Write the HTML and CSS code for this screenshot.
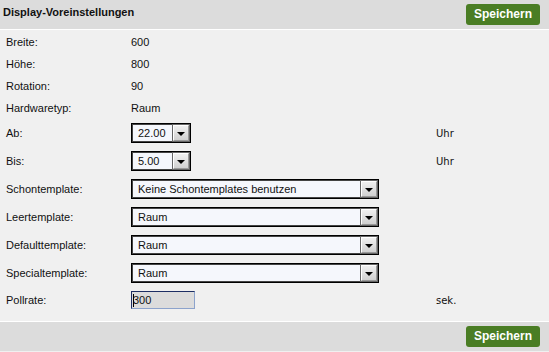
FILE: index.html
```html
<!DOCTYPE html>
<html>
<head>
    <meta charset="UTF-8">
    <title>Display-Voreinstellungen</title>
    <link rel="stylesheet" href="styles.css">
</head>
<body>
	<header class="bar">
		<h1>Display-Voreinstellungen</h1>
		<a class="btn" href="#">Speichern</a>
	</header>
	<main class="form">
		<div class="row info"><span class="label">Breite:</span><span class="value">600</span></div>
		<div class="row info"><span class="label">Höhe:</span><span class="value">800</span></div>
		<div class="row info"><span class="label">Rotation:</span><span class="value">90</span></div>
		<div class="row info"><span class="label">Hardwaretyp:</span><span class="value">Raum</span></div>

		<div class="row">
			<span class="label">Ab:</span>
			<div class="select small"><span class="select-value">22.00</span><span class="select-btn"></span></div>
			<span class="unit">Uhr</span>
		</div>
		<div class="row">
			<span class="label">Bis:</span>
			<div class="select small"><span class="select-value">5.00</span><span class="select-btn"></span></div>
			<span class="unit">Uhr</span>
		</div>
		<div class="row">
			<span class="label">Schontemplate:</span>
			<div class="select"><span class="select-value">Keine Schontemplates benutzen</span><span class="select-btn"></span></div>
		</div>
		<div class="row">
			<span class="label">Leertemplate:</span>
			<div class="select"><span class="select-value">Raum</span><span class="select-btn"></span></div>
		</div>
		<div class="row">
			<span class="label">Defaulttemplate:</span>
			<div class="select"><span class="select-value">Raum</span><span class="select-btn"></span></div>
		</div>
		<div class="row">
			<span class="label">Specialtemplate:</span>
			<div class="select"><span class="select-value">Raum</span><span class="select-btn"></span></div>
		</div>
		<div class="row poll">
			<span class="label">Pollrate:</span>
			<div class="input"><span class="caret"></span>300</div>
			<span class="unit">sek.</span>
		</div>
	</main>
	<footer class="bar foot">
		<a class="btn" href="#">Speichern</a>
	</footer>
</body>
</html>
```

FILE: styles.css
```css
body,h1{
	margin: 0;
}
body{
	background: #f0f0f0;
	font-family: "Liberation Sans", Arial, sans-serif;
	font-size: 11px;
	color: #111;
}
.bar{
	display: flex;
	align-items: center;
	justify-content: space-between;
	height: 29px;
	padding: 0 9px 0 3px;
	background: #dcdcdc;
	border-bottom: 1px solid #fff;
}
.bar h1{
	font-size: 11px;
	font-weight: bold;
	margin-top: -5px;
}
.foot{
	justify-content: flex-end;
	border-bottom: none;
	border-top: 1px solid #fff;
	align-items: flex-start;
	padding-top: 4px;
	height: 25px;
}
.btn{
	display: block;
	width: 74px;
	height: 21px;
	line-height: 21px;
	text-align: center;
	background: #4a7d24;
	color: #fff;
	font-weight: bold;
	font-size: 12px;
	text-decoration: none;
	border-radius: 3px;
}

.form{
	padding: 1px 0 8px 0;
}
.row{
	display: grid;
	grid-template-columns: 125px 305px auto;
	align-items: center;
	height: 28px;
	padding-left: 6px;
}
.row.info{
	height: 22px;
}
.row.poll{
	height: 26px;
}
.unit{
	font-family: "DejaVu Sans", Tahoma, sans-serif;
	font-size: 10px;
}

.select{
	display: flex;
	align-items: center;
	width: 248px;
	height: 20px;
	box-sizing: border-box;
	border: 1px solid #000;
	box-shadow: inset 1px 1px 0 #444, inset -1px -1px 0 #444;
	background: #f5f7fc;
}
.select.small{
	width: 60px;
}
.select-value{
	flex: 1;
	padding-left: 6px;
	white-space: nowrap;
	overflow: hidden;
}
.select-btn{
	position: relative;
	width: 16px;
	height: 16px;
	margin-right: 1px;
	box-sizing: border-box;
	border: 1px solid #999;
	border-top-color: #fff;
	border-left-color: #fff;
	background: linear-gradient(#f0f0f0, #d0d0d0);
	box-shadow: 0 0 0 1px #666;
}
.select-btn:after{
	content: "";
	position: absolute;
	left: 3px;
	top: 6px;
	border-left: 4px solid transparent;
	border-right: 4px solid transparent;
	border-top: 4px solid #000;
}

.input{
	display: flex;
	align-items: center;
	width: 64px;
	height: 18px;
	box-sizing: border-box;
	padding-left: 1px;
	background: #dcdcdc;
	border: 1px solid #8ca3cc;
	border-top-color: #1d2e63;
	border-left-color: #1d2e63;
}
.caret{
	display: inline-block;
	width: 1px;
	height: 13px;
	background: #000;
	margin-right: -1px;
}
```
